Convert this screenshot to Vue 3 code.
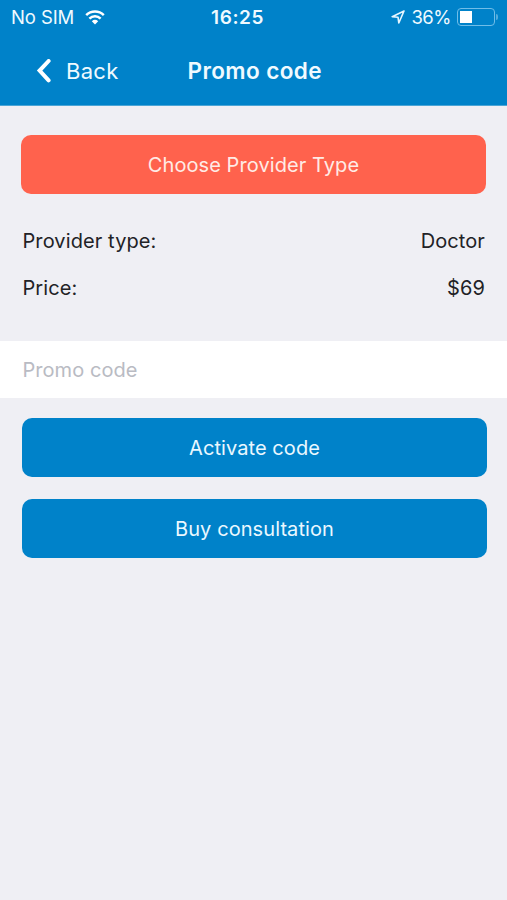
<script setup>
import { ref } from 'vue'

const providerType = ref('Doctor')
const price = ref(69)
const promoCode = ref('')
const battery = ref(36)
</script>

<template>
  <div class="screen">
    <header class="header">
      <div class="status">
        <div class="status-left">
          <span class="carrier">No SIM</span>
          <svg class="wifi" width="20" height="15" viewBox="0 0 20 15">
            <path d="M1.2 5.2a12.6 12.6 0 0 1 17.6 0M4.4 8.6a8 8 0 0 1 11.2 0" fill="none" stroke="#fff" stroke-width="2.5" />
            <path d="M10 14.6l-3.2-3.3a4.7 4.7 0 0 1 6.4 0z" fill="#fff" />
          </svg>
        </div>
        <span class="time">16:25</span>
        <div class="status-right">
          <svg class="location" width="14" height="14" viewBox="0 0 14 14">
            <path d="M13 1L1.2 6.7l5.8.5.8 5.8z" fill="none" stroke="#e6f6ff" stroke-width="1.6" stroke-linejoin="round" />
          </svg>
          <span class="percent">{{ battery }}%</span>
          <div class="battery">
            <div class="level" :style="{ width: battery + '%' }"></div>
          </div>
          <span class="cap"></span>
        </div>
      </div>
      <nav class="nav">
        <button class="back">
          <svg width="16" height="24" viewBox="0 0 16 24">
            <path d="M12.6 2L3.6 11.6l9 9.8" fill="none" stroke="#fff" stroke-width="4" stroke-linecap="round" />
          </svg>
          <span>Back</span>
        </button>
        <h1>Promo code</h1>
      </nav>
    </header>

    <main>
      <button class="btn choose">Choose Provider Type</button>
      <div class="row">
        <span>Provider type:</span>
        <span>{{ providerType }}</span>
      </div>
      <div class="row">
        <span>Price:</span>
        <span>${{ price }}</span>
      </div>
      <input v-model="promoCode" class="promo" type="text" placeholder="Promo code">
      <button class="btn">Activate code</button>
      <button class="btn">Buy consultation</button>
    </main>
  </div>
</template>

<style>
body {
  margin: 0;
  background-color: #efeff4;
}
</style>

<style scoped>
.screen {
  min-height: 900px;
  font-family: Inter, "Liberation Sans", sans-serif;
  background-color: #efeff4;
  color: #222226;
}
button, input {
  font-family: inherit;
  border: none;
  padding: 0;
}
.header {
  box-sizing: border-box;
  height: 106px;
  background-color: #0082c9;
  border-bottom: 1px solid #4ba5d6;
  color: #f0faff;
}
.status {
  display: flex;
  align-items: center;
  height: 34px;
  padding: 0 9px 0 11px;
  font-size: 18.5px;
}
.status-left, .status-right {
  display: flex;
  align-items: center;
}
.status-left {
  width: 200px;
}
.status-right {
  margin-left: auto;
}
.carrier {
  letter-spacing: -0.1px;
}
.wifi {
  margin-left: 11px;
}
.time {
  font-size: 19px;
  font-weight: 600;
  letter-spacing: 0.6px;
}
.location {
  margin-right: 6px;
}
.percent {
  letter-spacing: -0.5px;
}
.battery {
  box-sizing: border-box;
  width: 38px;
  height: 18px;
  margin-left: 6px;
  padding: 2px;
  border: 1px solid #70bde8;
  border-radius: 4px;
}
.level {
  height: 12px;
  background-color: #fff;
}
.cap {
  width: 2px;
  height: 6px;
  margin-left: 1px;
  border-radius: 0 2px 2px 0;
  background-color: #55acdc;
}
.nav {
  display: flex;
  align-items: center;
  height: 73px;
  padding-left: 36px;
}
.back {
  display: flex;
  align-items: center;
  gap: 14px;
  width: 151.5px;
  background: none;
  color: inherit;
  font-size: 22px;
  letter-spacing: 0.3px;
}
h1 {
  margin: 0;
  font-size: 22.5px;
  font-weight: 600;
  letter-spacing: 0.4px;
}
main {
  display: flex;
  flex-direction: column;
}
.btn {
  height: 59px;
  margin: 20px 20px 2px 22px;
  border-radius: 10px;
  background-color: #0082c9;
  color: #eaf8ff;
  font-size: 20px;
  letter-spacing: 0.08px;
}
.choose {
  margin: 29px 21px 23px;
  background-color: #ff624d;
  color: #ffebe5;
}
.row {
  display: flex;
  justify-content: space-between;
  align-items: center;
  height: 47px;
  padding: 0 22px 0 22.5px;
  font-size: 20px;
  letter-spacing: 0.1px;
}
.promo {
  box-sizing: border-box;
  width: 100%;
  height: 57px;
  margin-top: 30px;
  padding: 1px 22px 0 22.5px;
  outline: none;
  border-radius: 0;
  background-color: #fff;
  font-size: 20px;
  letter-spacing: 0.05px;
}
.promo::placeholder {
  color: #b9bbc3;
  opacity: 1;
}
</style>
